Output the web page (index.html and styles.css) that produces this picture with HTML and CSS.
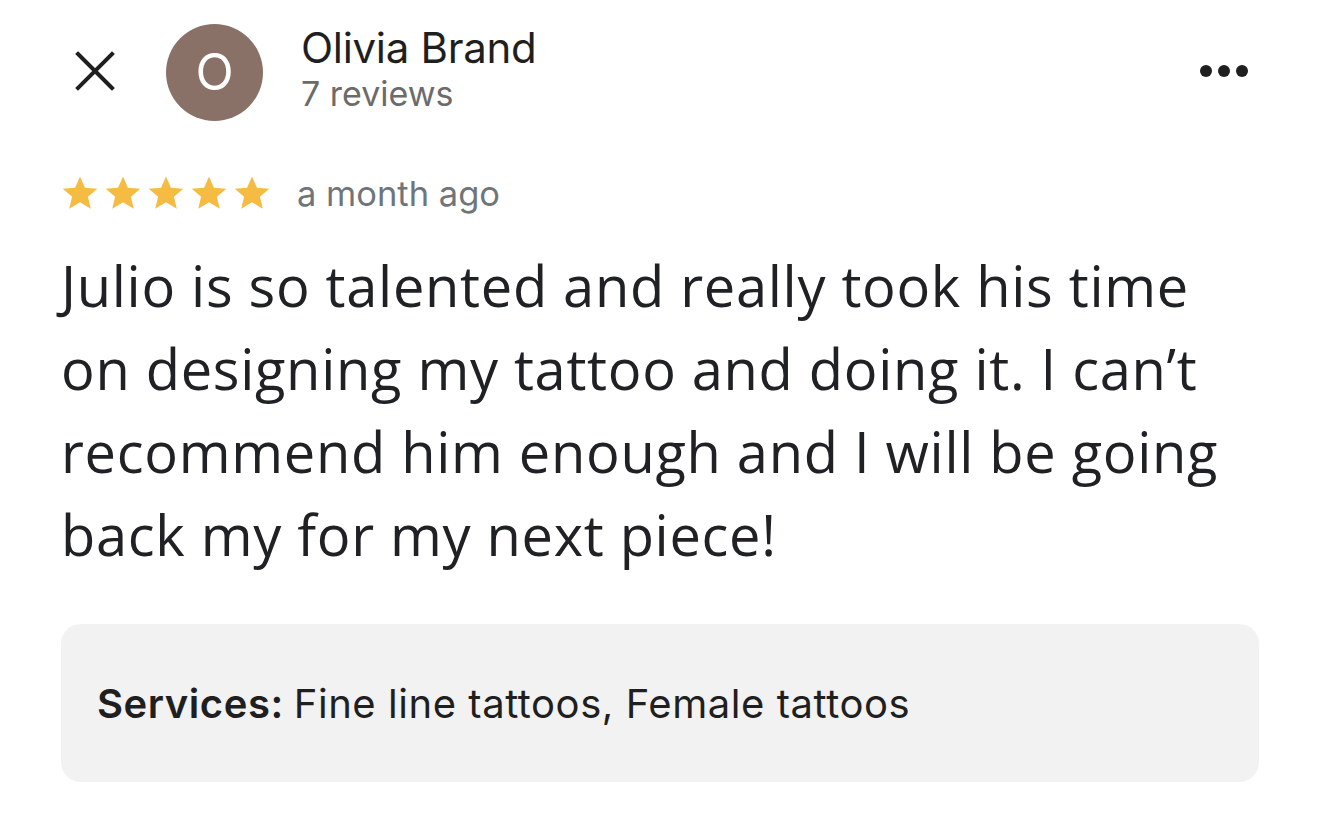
FILE: index.html
```html
<!DOCTYPE html>
<html>
<head>
<meta charset="utf-8">
<link rel="stylesheet" href="styles.css">
</head>
<body>
<div class="page">
  <header class="header">
    <svg class="close" width="40" height="40" viewBox="0 0 40 40"><path d="M3 3 L37 37 M37 3 L3 37" stroke="#1f1f1f" stroke-width="4" stroke-linecap="square"/></svg>
    <div class="avatar">O</div>
    <div class="who">
      <div class="name">Olivia Brand</div>
      <div class="count">7 reviews</div>
    </div>
    <div class="more"><span></span><span></span><span></span></div>
  </header>
  <div class="meta">
    <div class="stars">
      <svg viewBox="0 0 24 24"><path d="M12 1.5l3.1 7.2 7.8.6-5.9 5.1 1.8 7.6L12 17.9l-6.8 4.1 1.8-7.6-5.9-5.1 7.8-.6z"/></svg>
      <svg viewBox="0 0 24 24"><path d="M12 1.5l3.1 7.2 7.8.6-5.9 5.1 1.8 7.6L12 17.9l-6.8 4.1 1.8-7.6-5.9-5.1 7.8-.6z"/></svg>
      <svg viewBox="0 0 24 24"><path d="M12 1.5l3.1 7.2 7.8.6-5.9 5.1 1.8 7.6L12 17.9l-6.8 4.1 1.8-7.6-5.9-5.1 7.8-.6z"/></svg>
      <svg viewBox="0 0 24 24"><path d="M12 1.5l3.1 7.2 7.8.6-5.9 5.1 1.8 7.6L12 17.9l-6.8 4.1 1.8-7.6-5.9-5.1 7.8-.6z"/></svg>
      <svg viewBox="0 0 24 24"><path d="M12 1.5l3.1 7.2 7.8.6-5.9 5.1 1.8 7.6L12 17.9l-6.8 4.1 1.8-7.6-5.9-5.1 7.8-.6z"/></svg>
    </div>
    <span class="when">a month ago</span>
  </div>
  <p class="review">Julio is so talented and really took his time on designing my tattoo and doing it. I can’t recommend him enough and I will be going back my for my next piece!</p>
  <div class="services"><b>Services:</b> Fine line tattoos, Female tattoos</div>
</div>
</body>
</html>
```
FILE: styles.css
```css
html, body { margin: 0; padding: 0; background: #fff; }
body { width: 1320px; height: 814px; overflow: hidden; font-family: Inter, Roboto, "Liberation Sans", sans-serif; }
.page { padding: 0 61px 0 61px; }
.header { display: flex; align-items: center; height: 144px; }
.header .close { margin-left: 14px; margin-top: -2px; flex: none; }
.avatar { width: 97px; height: 97px; border-radius: 50%; background: #8a7168; color: #fff; display: flex; align-items: center; justify-content: center; font-size: 50px; margin-left: 51px; flex: none; }
.who { margin-left: 38px; display: flex; flex-direction: column; margin-top: -4px; }
.name { font-size: 42px; color: #1f1f1f; line-height: 48px; letter-spacing: -0.3px; }
.count { font-size: 34px; color: #6b6b6b; line-height: 44px; }
.more { margin-left: auto; margin-right: 11px; display: flex; gap: 6px; margin-top: -2px; }
.more span { width: 12px; height: 12px; border-radius: 50%; background: #1f1f1f; }
.meta { display: flex; align-items: center; margin-top: 27px; height: 44px; }
.stars { display: flex; gap: 5px; }
.stars svg { width: 38px; height: 38px; fill: #f6bb43; }
.when { margin-left: 26px; font-size: 34.5px; color: #70757a; }
.review { font-family: "Open Sans", Roboto, sans-serif; font-size: 56px; line-height: 83px; color: #202124; margin: 29px 0 0 0; letter-spacing: 0.7px; width: 1205px; }
.services { margin-top: 48px; height: 158px; background: #f2f2f2; border-radius: 20px; display: flex; align-items: center; padding-left: 36px; font-size: 40px; color: #1f1f1f; box-sizing: border-box; letter-spacing: 0.55px; }
.services b { font-weight: 600; margin-right: 10px; }
```
